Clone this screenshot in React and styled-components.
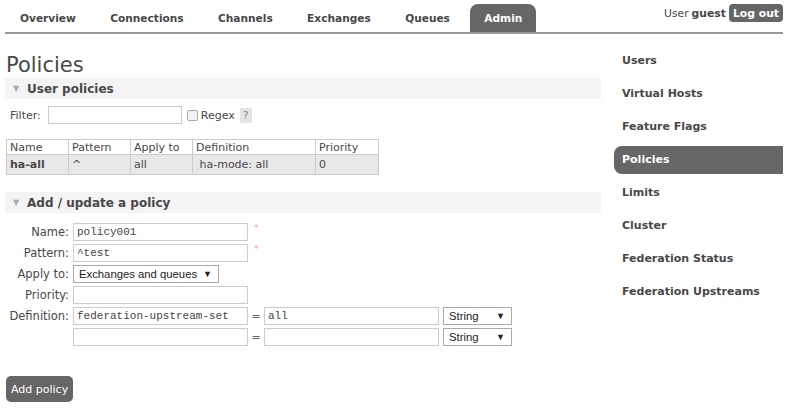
import styled, { createGlobalStyle } from "styled-components";

const GlobalStyle = createGlobalStyle`
  body {
    margin: 0;
    font-family: "DejaVu Sans", Verdana, sans-serif;
    font-size: 11px;
    color: #484848;
    background: #fff;
  }
`;

const Header = styled.div`
  display: flex;
  align-items: flex-end;
  justify-content: space-between;
  margin: 0 10px 0 5px;
  padding-top: 4px;
  height: 28px;
  border-bottom: 2px solid #999;
`;

const Tabs = styled.ul`
  display: flex;
  list-style: none;
  margin: 0;
  padding: 0 0 0 1px;
  gap: 6.4px;
`;

const Tab = styled.li`
  height: 28px;
  line-height: 28px;
  padding: 0 14px;
  font-weight: bold;
  font-size: 10.6px;
  color: ${(p) => (p.$active ? "#fff" : "#484848")};
  background: ${(p) => (p.$active ? "#666" : "transparent")};
  border-radius: 8px 8px 0 0;
`;

const UserBox = styled.div`
  align-self: flex-start;
  display: flex;
  align-items: center;
  gap: 3px;
  font-size: 10.8px;
  b {
    font-weight: bold;
  }
`;

const LogOut = styled.button`
  font-family: inherit;
  font-size: 10.8px;
  font-weight: bold;
  color: #fff;
  background: #666;
  border: none;
  border-radius: 4px;
  height: 18px;
  padding: 0 4px;
`;

const Body = styled.div`
  display: flex;
  justify-content: space-between;
  margin: 0 10px 0 5px;
`;

const Main = styled.div`
  width: 596px;
`;

const Title = styled.h1`
  font-weight: normal;
  font-size: 21px;
  margin: 19px 0 0 1px;
  line-height: 24px;
  color: #484848;
`;

const SectionBar = styled.div`
  display: flex;
  align-items: center;
  height: 21px;
  background: #f4f4f4;
  font-weight: bold;
  font-size: 12px;
  color: #484848;
  margin-top: ${(p) => p.$mt}px;
  span.tri {
    color: #aaa;
    font-size: 8px;
    width: 22px;
    text-align: center;
  }
`;

const FilterRow = styled.div`
  display: flex;
  align-items: center;
  margin: 7px 0 0 5px;
  height: 18px;
`;

const Label = styled.span`
  margin-right: 7px;
`;

const TextInput = styled.input`
  box-sizing: border-box;
  width: ${(p) => p.$w}px;
  height: 18px;
  border: 1px solid #ccc;
  padding: 0 3px;
  font-family: "Liberation Mono", monospace;
  font-size: 11px;
  color: #444;
  outline: none;
`;

const Check = styled.span`
  display: inline-block;
  width: 9px;
  height: 9px;
  border: 1px solid #aaa;
  border-radius: 2px;
  background: #f2f2f2;
  margin: 0 3px 0 5px;
`;

const Help = styled.span`
  display: inline-block;
  background: #e4e4e4;
  color: #888;
  padding: 1px 3px;
  margin-left: 5px;
  font-size: 11px;
`;

const Table = styled.table`
  border-collapse: collapse;
  margin: 15px 0 0 1px;
  font-size: 11px;
  td,
  th {
    border: 1px solid #ccc;
    text-align: left;
    font-weight: normal;
    padding: 0 3px;
  }
  th {
    height: 14px;
    color: #484848;
  }
  td {
    height: 19px;
    background: #e8e8e8;
  }
`;

const Form = styled.div`
  display: grid;
  grid-template-columns: 64px auto;
  row-gap: 3px;
  column-gap: 4px;
  margin: 10px 0 0 0;
  align-items: center;
`;

const FormLabel = styled.label`
  text-align: right;
  font-size: 11.5px;
`;

const FieldRow = styled.div`
  display: flex;
  align-items: center;
  height: 18px;
`;

const Req = styled.span`
  color: #f99;
  font-size: 9px;
  align-self: flex-start;
  margin-left: 6px;
`;

const Select = styled.div`
  box-sizing: border-box;
  display: flex;
  justify-content: space-between;
  align-items: center;
  white-space: nowrap;
  width: ${(p) => p.$w}px;
  height: 18px;
  border: 1px solid #aaa;
  background: #fff;
  padding: 0 6px 0 5px;
  font-family: "Liberation Sans", Arial, sans-serif;
  font-size: 11.3px;
  color: #222;
  margin-left: ${(p) => p.$ml || 0}px;
  span.arr {
    font-size: 9px;
  }
`;

const Eq = styled.span`
  width: 16px;
  text-align: center;
  color: #666;
`;

const AddButton = styled.button`
  margin: 30px 0 0 1px;
  height: 26px;
  padding: 0 5px;
  background: #666;
  color: #fff;
  border: none;
  border-radius: 5px;
  font-family: inherit;
  font-size: 11px;
`;

const Side = styled.ul`
  list-style: none;
  margin: 13px 0 0 0;
  padding: 0;
  width: 169px;
`;

const SideItem = styled.li`
  height: 28px;
  line-height: 28px;
  margin-bottom: 5px;
  padding-left: 8px;
  font-weight: bold;
  font-size: 11px;
  color: ${(p) => (p.$active ? "#fff" : "#484848")};
  background: ${(p) => (p.$active ? "#666" : "transparent")};
  border-radius: 8px 0 0 8px;
`;

const tabs = ["Overview", "Connections", "Channels", "Exchanges", "Queues", "Admin"];
const sideItems = [
  "Users",
  "Virtual Hosts",
  "Feature Flags",
  "Policies",
  "Limits",
  "Cluster",
  "Federation Status",
  "Federation Upstreams",
];

export default function App() {
  return (
    <>
      <GlobalStyle />
      <Header>
        <Tabs>
          {tabs.map((t) => (
            <Tab key={t} $active={t === "Admin"}>
              {t}
            </Tab>
          ))}
        </Tabs>
        <UserBox>
          User <b>guest</b>
          <LogOut>Log out</LogOut>
        </UserBox>
      </Header>
      <Body>
        <Main>
          <Title>Policies</Title>
          <SectionBar $mt={1}>
            <span className="tri">▼</span>User policies
          </SectionBar>
          <FilterRow>
            <Label>Filter:</Label>
            <TextInput $w={134} />
            <Check />
            Regex
            <Help>?</Help>
          </FilterRow>
          <Table>
            <thead>
              <tr>
                <th style={{ width: 55 }}>Name</th>
                <th style={{ width: 55 }}>Pattern</th>
                <th style={{ width: 55 }}>Apply to</th>
                <th style={{ width: 116 }}>Definition</th>
                <th style={{ width: 56 }}>Priority</th>
              </tr>
            </thead>
            <tbody>
              <tr>
                <td>
                  <b>ha-all</b>
                </td>
                <td>^</td>
                <td>all</td>
                <td>&nbsp;ha-mode: all</td>
                <td>0</td>
              </tr>
            </tbody>
          </Table>
          <SectionBar $mt={17}>
            <span className="tri">▼</span>Add / update a policy
          </SectionBar>
          <Form>
            <FormLabel>Name:</FormLabel>
            <FieldRow>
              <TextInput $w={175} defaultValue="policy001" />
              <Req>*</Req>
            </FieldRow>
            <FormLabel>Pattern:</FormLabel>
            <FieldRow>
              <TextInput $w={175} defaultValue="^test" />
              <Req>*</Req>
            </FieldRow>
            <FormLabel>Apply to:</FormLabel>
            <FieldRow>
              <Select $w={146}>
                Exchanges and queues <span className="arr">▼</span>
              </Select>
            </FieldRow>
            <FormLabel>Priority:</FormLabel>
            <FieldRow>
              <TextInput $w={175} />
            </FieldRow>
            <FormLabel>Definition:</FormLabel>
            <FieldRow>
              <TextInput $w={175} defaultValue="federation-upstream-set" />
              <Eq>=</Eq>
              <TextInput $w={175} defaultValue="all" />
              <Select $w={69} $ml={4}>
                String <span className="arr">▼</span>
              </Select>
            </FieldRow>
            <span />
            <FieldRow>
              <TextInput $w={175} />
              <Eq>=</Eq>
              <TextInput $w={175} />
              <Select $w={69} $ml={4}>
                String <span className="arr">▼</span>
              </Select>
            </FieldRow>
          </Form>
          <AddButton>Add policy</AddButton>
        </Main>
        <Side>
          {sideItems.map((s) => (
            <SideItem key={s} $active={s === "Policies"}>
              {s}
            </SideItem>
          ))}
        </Side>
      </Body>
    </>
  );
}
